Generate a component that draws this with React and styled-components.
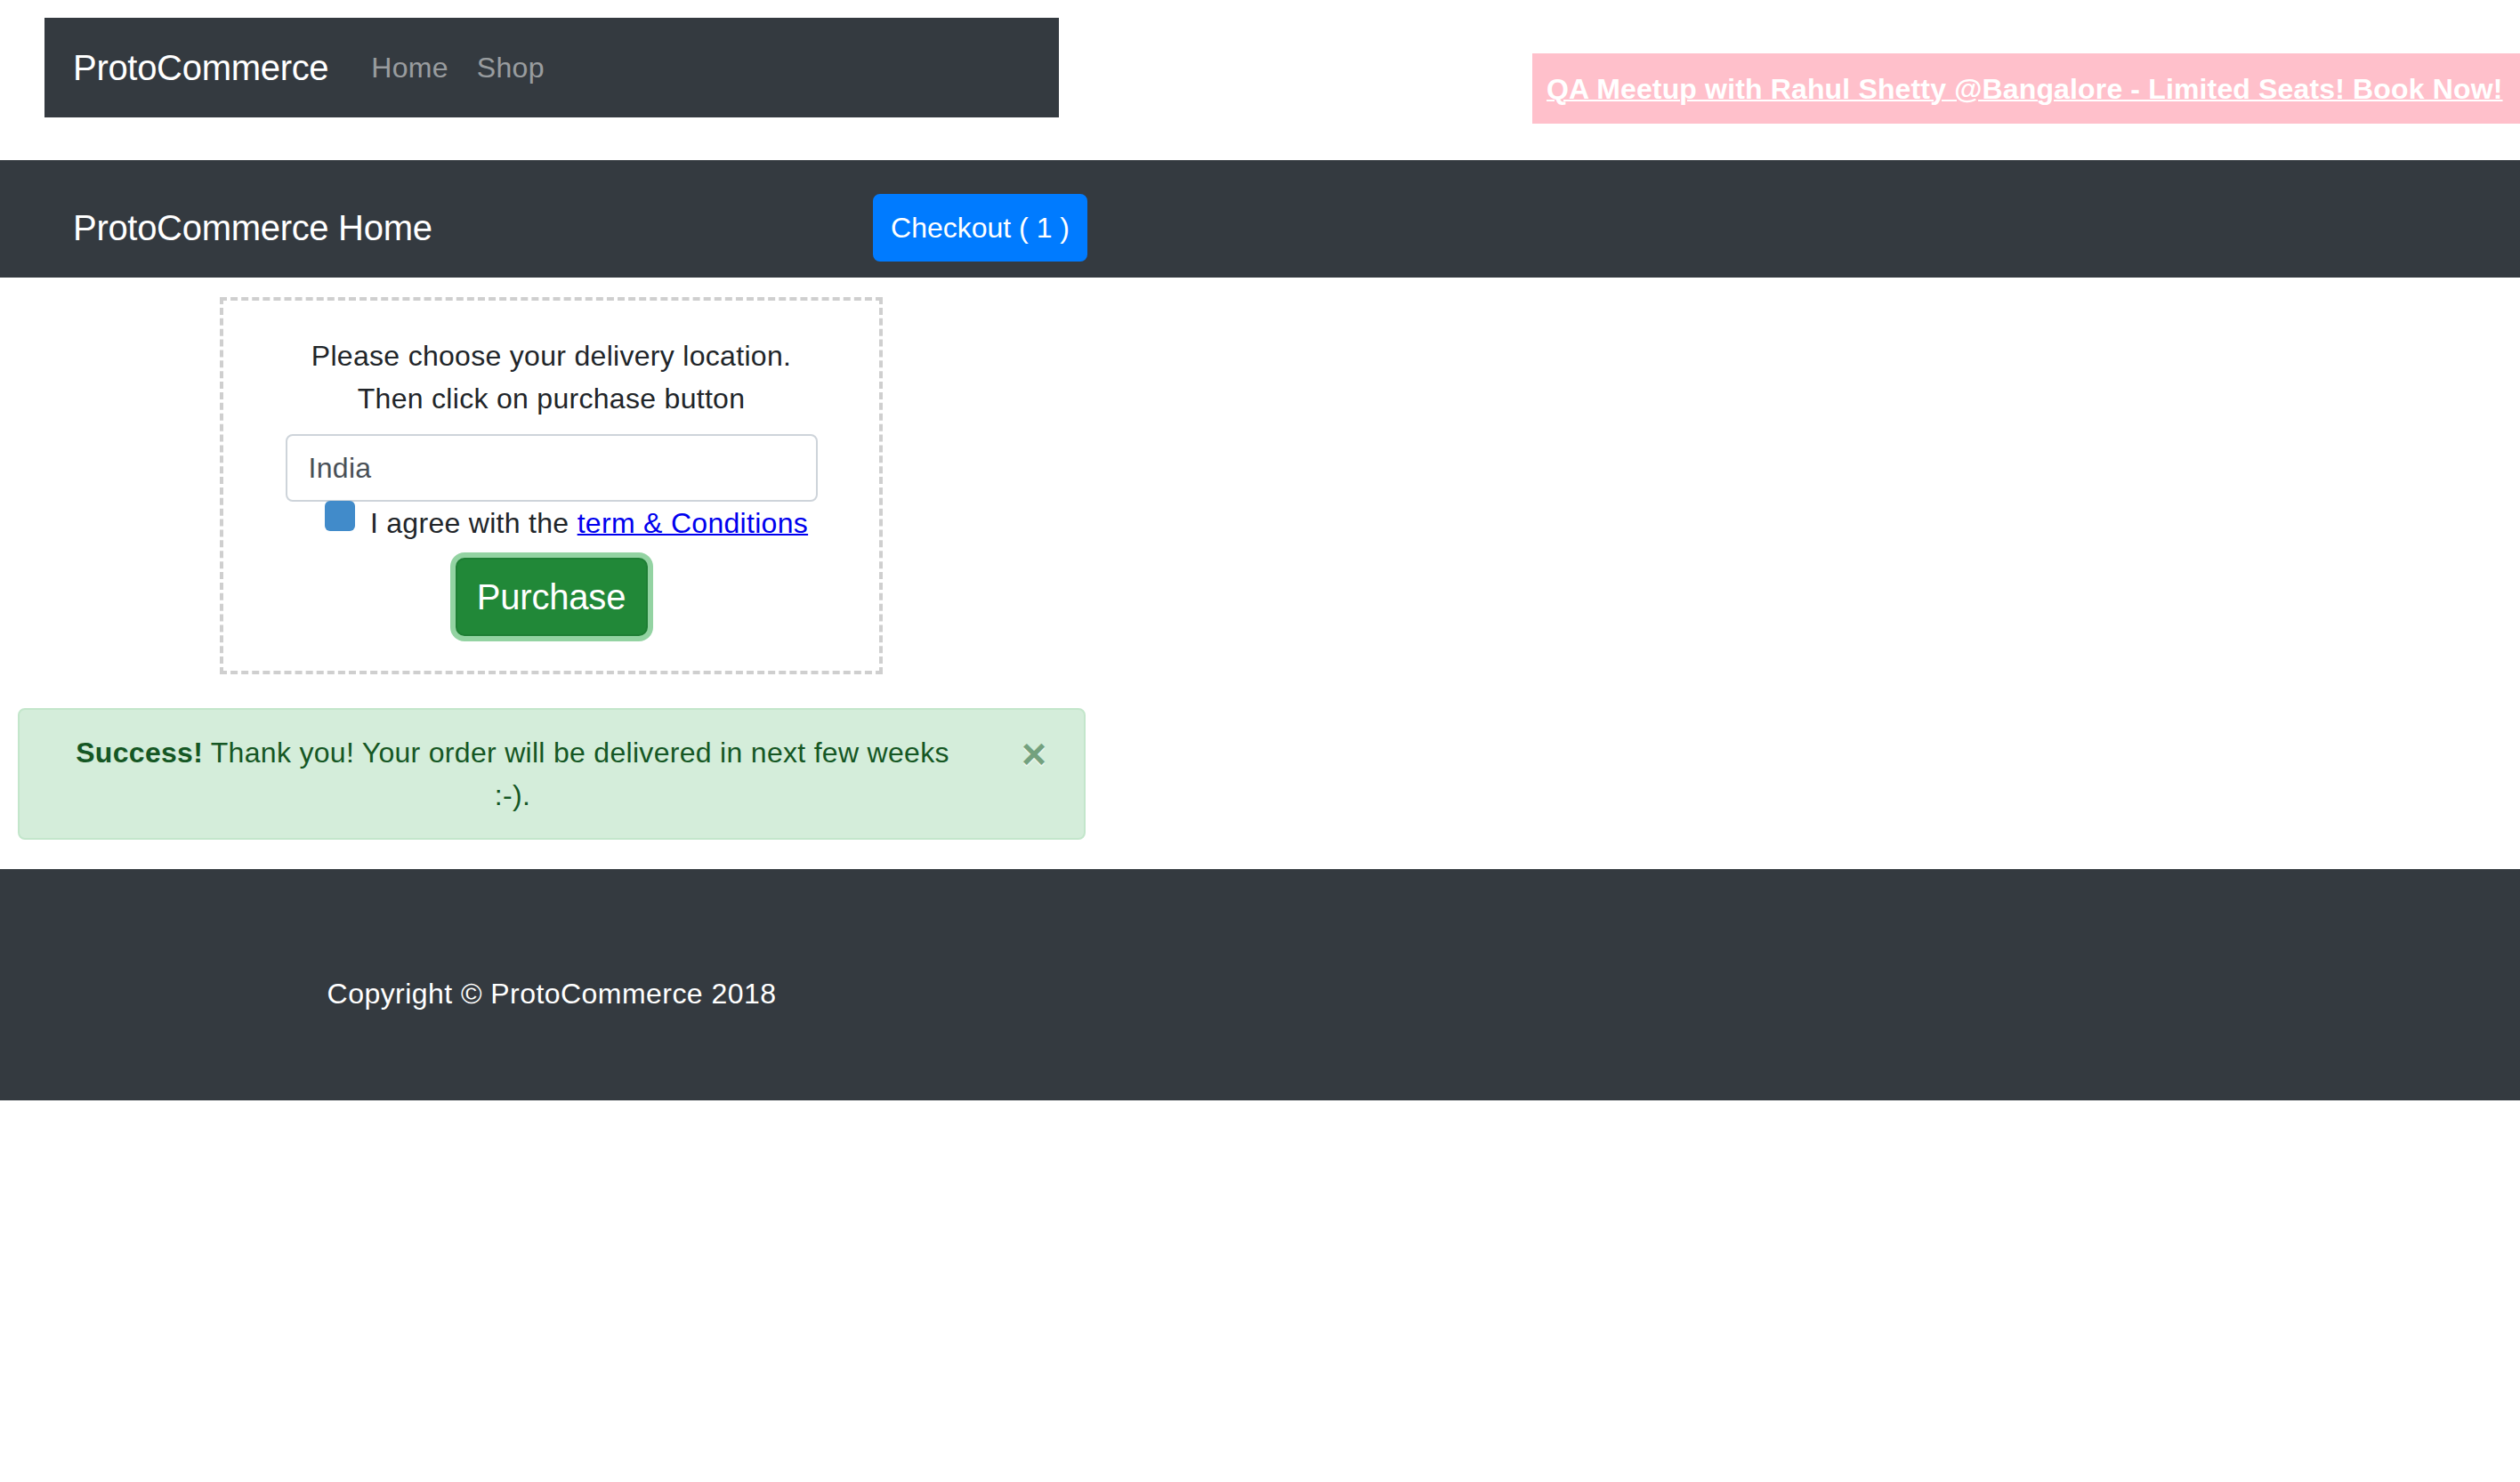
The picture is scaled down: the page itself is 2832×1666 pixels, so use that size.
import React from "react";
import styled, { createGlobalStyle } from "styled-components";

const GlobalStyle = createGlobalStyle`
  html, body {
    margin: 0;
    padding: 0;
    background: #ffffff;
  }
  body {
    font-family: "Liberation Sans", Arial, Helvetica, sans-serif;
    font-size: 32px;
    line-height: 48px;
    color: #212529;
    letter-spacing: 0.3px;
  }
  * { box-sizing: border-box; }
`;

const Header = styled.header`
  display: flex;
  justify-content: space-between;
  align-items: flex-start;
  height: 180px;
`;

const TopNav = styled.nav`
  margin: 20px 0 0 50px;
  width: 1140px;
  height: 112px;
  padding: 16px 32px;
  background: #343a40;
  display: flex;
  align-items: center;
`;

const Brand = styled.a`
  font-size: 40px;
  line-height: 60px;
  letter-spacing: -0.3px;
  color: #ffffff;
  text-decoration: none;
  margin-right: 32px;
  white-space: nowrap;
`;

const NavLink = styled.a`
  font-size: 32px;
  line-height: 48px;
  padding: 16px;
  color: rgba(255, 255, 255, 0.5);
  text-decoration: none;
`;

const Banner = styled.div`
  margin-top: 60px;
  width: 1110px;
  height: 79px;
  padding: 0 16px;
  background: #ffc0cb;
  display: flex;
  align-items: center;
`;

const BannerLink = styled.a`
  color: #ffffff;
  font-weight: 700;
  font-size: 32px;
  line-height: 48px;
  letter-spacing: 0.15px;
  white-space: nowrap;
  text-decoration: underline;
  text-decoration-thickness: 2px;
`;

const SubNav = styled.nav`
  background: #343a40;
  height: 132px;
`;

const SubNavInner = styled.div`
  width: 1240px;
  height: 132px;
  padding: 38px 18px 18px 82px;
  display: flex;
  justify-content: space-between;
  align-items: center;
`;

const SubBrand = styled.span`
  font-size: 40px;
  line-height: 60px;
  letter-spacing: -0.3px;
  color: #ffffff;
`;

const CheckoutButton = styled.button`
  height: 76px;
  padding: 0 18px;
  font-family: inherit;
  font-size: 32px;
  line-height: 48px;
  letter-spacing: 0;
  color: #ffffff;
  background: #007bff;
  border: 2px solid #007bff;
  border-radius: 8px;
  cursor: pointer;
`;

const Main = styled.main`
  width: 1240px;
`;

const DeliveryBox = styled.section`
  margin: 22px 0 0 247px;
  width: 745px;
  border: 4px dashed #cfcfcf;
  padding: 38px 0 39px;
  display: flex;
  flex-direction: column;
  align-items: center;
  text-align: center;
`;

const Prompt = styled.p`
  margin: 0 0 16px;
  font-size: 32px;
  line-height: 48px;
`;

const LocationInput = styled.input`
  width: 598px;
  height: 76px;
  padding: 0 24px;
  font-family: inherit;
  font-size: 32px;
  letter-spacing: 0.3px;
  color: #495057;
  background: #ffffff;
  border: 2px solid #ced4da;
  border-radius: 8px;
  outline: none;
`;

const AgreeRow = styled.label`
  display: flex;
  align-items: flex-start;
  gap: 17px;
  padding-left: 34px;
  font-size: 32px;
  line-height: 48px;
  white-space: nowrap;
`;

const Checkbox = styled.input`
  appearance: none;
  -webkit-appearance: none;
  margin: -1px 0 0;
  width: 34px;
  height: 34px;
  border-radius: 6px;
  background: #418bca;
  border: none;
  flex: none;
`;

const TermsLink = styled.a`
  color: #0000ee;
  text-decoration: underline;
  text-decoration-thickness: 2px;
`;

const PurchaseButton = styled.button`
  margin-top: 15px;
  width: 216px;
  height: 88px;
  font-family: inherit;
  font-size: 40px;
  line-height: 60px;
  letter-spacing: -0.2px;
  color: #ffffff;
  background: #218838;
  border: 2px solid #1e7e34;
  border-radius: 10px;
  box-shadow: 0 0 0 6px rgba(40, 167, 69, 0.5);
  cursor: pointer;
`;

const Alert = styled.div`
  position: relative;
  margin: 38px 20px 0;
  padding: 24px 128px 24px 40px;
  background: #d4edda;
  border: 2px solid #c3e6cb;
  border-radius: 8px;
  color: #155724;
  font-size: 32px;
  line-height: 48px;
  text-align: center;
`;

const CloseButton = styled.button`
  position: absolute;
  top: 0;
  right: 0;
  padding: 26px 42px 22px;
  background: transparent;
  border: 0;
  font-family: inherit;
  font-size: 48px;
  font-weight: 700;
  line-height: 1;
  color: #155724;
  opacity: 0.5;
  text-shadow: 0 2px 0 #ffffff;
  cursor: pointer;
`;

const Footer = styled.footer`
  margin-top: 33px;
  background: #343a40;
  padding: 116px 0 96px;
`;

const FooterText = styled.p`
  margin: 0;
  width: 1240px;
  text-align: center;
  color: #ffffff;
  font-size: 32px;
  line-height: 48px;
  letter-spacing: 0.45px;
`;

export default function App() {
  return (
    <>
      <GlobalStyle />
      <Header>
        <TopNav>
          <Brand href="#">ProtoCommerce</Brand>
          <NavLink href="#">Home</NavLink>
          <NavLink href="#">Shop</NavLink>
        </TopNav>
        <Banner>
          <BannerLink href="#">
            QA Meetup with Rahul Shetty @Bangalore - Limited Seats! Book Now!
          </BannerLink>
        </Banner>
      </Header>

      <SubNav>
        <SubNavInner>
          <SubBrand>ProtoCommerce Home</SubBrand>
          <CheckoutButton>Checkout ( 1 )</CheckoutButton>
        </SubNavInner>
      </SubNav>

      <Main>
        <DeliveryBox>
          <Prompt>
            Please choose your delivery location.
            <br />
            Then click on purchase button
          </Prompt>
          <LocationInput defaultValue="India" />
          <AgreeRow>
            <Checkbox type="checkbox" defaultChecked />
            <span>
              I agree with the <TermsLink href="#">term &amp; Conditions</TermsLink>
            </span>
          </AgreeRow>
          <PurchaseButton>Purchase</PurchaseButton>
        </DeliveryBox>

        <Alert>
          <strong>Success!</strong> Thank you! Your order will be delivered in next few weeks
          <br />
          :-).
          <CloseButton aria-label="Close">×</CloseButton>
        </Alert>
      </Main>

      <Footer>
        <FooterText>Copyright © ProtoCommerce 2018</FooterText>
      </Footer>
    </>
  );
}
